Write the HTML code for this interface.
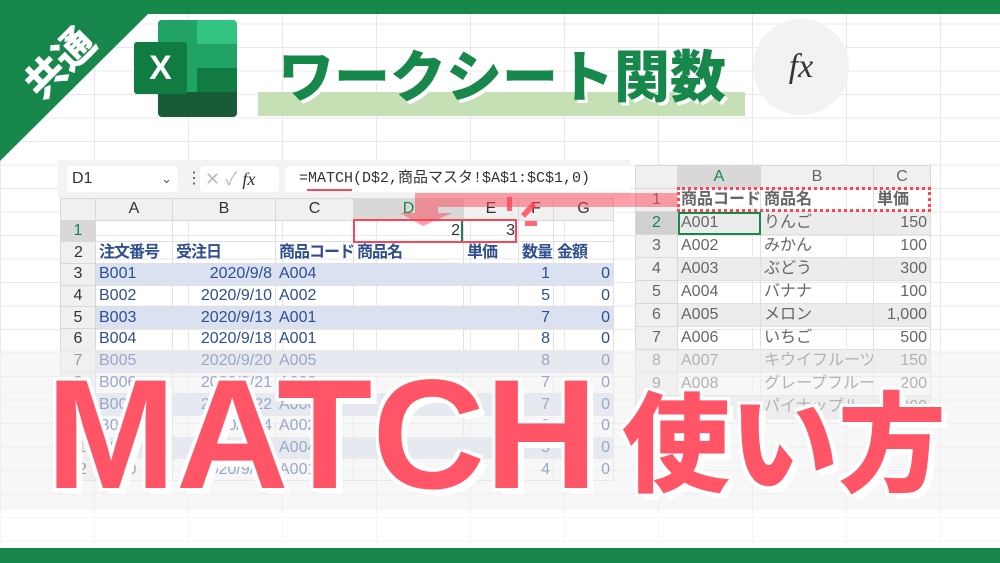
<!DOCTYPE html>
<html><head><meta charset="utf-8"><style>
*{margin:0;padding:0;box-sizing:border-box}
body{width:1000px;height:563px;overflow:hidden;position:relative;background:#fff;font-family:"Liberation Sans","Noto Sans CJK JP",sans-serif}
.grid{position:absolute;left:0;top:0;width:1000px;height:563px;background-image:linear-gradient(#e8e8e8 1px,transparent 1px),linear-gradient(90deg,#e8e8e8 1px,transparent 1px);background-size:94px 23.5px;background-position:0 0,0 0}
.abs{position:absolute}
table{border-collapse:collapse;position:absolute;table-layout:fixed}
td{border:1px solid #e0e0e0;height:21.7px;font-size:16px;padding:0 3px;white-space:nowrap;overflow:hidden;color:#2f4f8f;line-height:20px}
td.h{background:#f0f0f0;color:#333;text-align:center;border-color:#d8d8d8}
td.r{text-align:right}
tr.b td{background:#dae1f0}
tr.b td.h{background:#f0f0f0}
tr.hd td{color:#2f4f8f;font-weight:bold;letter-spacing:-1px}
#t2 td{color:#666;height:23px;font-size:16px}
#t2 tr.g td{background:#ececec}
#t2 tr.g td.h{background:#f0f0f0}
</style></head><body>
<div class="grid"></div>
<div class="abs" style="left:0;top:0;width:1000px;height:14px;background:#18874b"></div>
<div class="abs" style="left:0;top:548px;width:1000px;height:15px;background:#18874b"></div>
<svg class="abs" style="left:0;top:0" width="160" height="170"><polygon points="0,0 148,14 0,161" fill="#18874b"/><polygon points="0,0 160,0 148,14" fill="#18874b"/></svg>
<div class="abs" style="left:18px;top:38px;color:#fff;font-weight:900;font-size:40px;transform:rotate(-45deg);font-family:'Noto Sans CJK JP',sans-serif;line-height:46px">共通</div>
<!-- excel logo -->
<div class="abs" style="left:158px;top:20px;width:79px;height:97px;border-radius:4px;overflow:hidden">
<div style="height:24px;background:#33c481"></div><div style="height:24px;background:#21a366"></div><div style="height:24px;background:#107c41"></div><div style="height:25px;background:#185c37"></div>
<div class="abs" style="left:0;top:0;width:39px;height:72px;background:#21a366"></div></div>
<div class="abs" style="left:134px;top:42px;width:53px;height:52px;background:#107c41;border-radius:3px;color:#fff;font-size:34px;font-weight:bold;text-align:center;line-height:52px">X</div>
<div class="abs" style="left:258px;top:92px;width:487px;height:24px;background:#c5e0b4"></div>
<div class="abs" style="left:278px;top:32px;font-size:56px;font-weight:900;color:#18874b;font-family:'Noto Sans CJK JP',sans-serif;line-height:84px;letter-spacing:0;text-shadow:3px 3px 0 #fff">ワークシート関数</div>
<div class="abs" style="left:753px;top:19px;width:96px;height:96px;border-radius:50%;background:#f2f2f2;text-align:center;line-height:96px;font-family:'Liberation Serif',serif;font-style:italic;font-size:34px;color:#333">fx</div>
<!-- formula bar -->
<div class="abs" style="left:58px;top:160px;width:572px;height:38px;background:#f3f3f3"></div>
<div class="abs" style="left:67px;top:166px;width:111px;height:26px;background:#fff;border-radius:4px;font-size:16px;line-height:26px;padding-left:5px;color:#333">D1<span style="position:absolute;right:6px;color:#555;font-size:13px">&#8964;</span></div>
<div class="abs" style="left:186px;top:166px;color:#555;font-size:16px;line-height:26px">&#8942;</div>
<div class="abs" style="left:200px;top:166px;width:79px;height:26px;background:#fff;border-radius:4px;font-size:18px;line-height:26px;color:#bbb;padding-left:5px">&#10005; &#10003; <i style="font-family:'Liberation Serif',serif;color:#333">fx</i></div>
<div class="abs" style="left:285px;top:166px;width:345px;height:26px;background:#fff;border-radius:4px 0 0 4px;font-family:'Liberation Mono','Noto Sans CJK JP',monospace;font-size:15px;line-height:26px;padding-left:14px;color:#333">=MATCH(D$2,商品マスタ!$A$1:$C$1,0)</div>
<div class="abs" style="left:307px;top:189px;width:45px;height:2px;background:#f45"></div>
<!-- left sheet -->
<table style="left:60px;top:198px;width:553px">
<colgroup><col style="width:35px"><col style="width:77px"><col style="width:103px"><col style="width:78px"><col style="width:110px"><col style="width:55px"><col style="width:35px"><col style="width:60px"></colgroup>
<tr><td class="h"></td><td class="h">A</td><td class="h">B</td><td class="h">C</td><td class="h" style="background:#d8d8d8;color:#18874b">D</td><td class="h">E</td><td class="h">F</td><td class="h">G</td></tr>
<tr><td class="h" style="background:#d8d8d8;color:#18874b">1</td><td></td><td></td><td></td><td class="r" style="color:#333">2</td><td class="r" style="color:#333">3</td><td></td><td></td></tr>
<tr class="hd"><td class="h" style="font-weight:normal;color:#333">2</td><td>注文番号</td><td>受注日</td><td>商品コード</td><td>商品名</td><td>単価</td><td>数量</td><td>金額</td></tr>
<tr class="b"><td class="h">3</td><td>B001</td><td class="r">2020/9/8</td><td>A004</td><td></td><td></td><td class="r">1</td><td class="r">0</td></tr>
<tr><td class="h">4</td><td>B002</td><td class="r">2020/9/10</td><td>A002</td><td></td><td></td><td class="r">5</td><td class="r">0</td></tr>
<tr class="b"><td class="h">5</td><td>B003</td><td class="r">2020/9/13</td><td>A001</td><td></td><td></td><td class="r">7</td><td class="r">0</td></tr>
<tr><td class="h">6</td><td>B004</td><td class="r">2020/9/18</td><td>A001</td><td></td><td></td><td class="r">8</td><td class="r">0</td></tr>
<tr class="b"><td class="h">7</td><td>B005</td><td class="r">2020/9/20</td><td>A005</td><td></td><td></td><td class="r">8</td><td class="r">0</td></tr>
<tr><td class="h">8</td><td>B006</td><td class="r">2020/9/21</td><td>A003</td><td></td><td></td><td class="r">7</td><td class="r">0</td></tr>
<tr class="b"><td class="h">9</td><td>B007</td><td class="r">2020/9/22</td><td>A006</td><td></td><td></td><td class="r">7</td><td class="r">0</td></tr>
<tr><td class="h">10</td><td>B008</td><td class="r">2020/9/24</td><td>A002</td><td></td><td></td><td class="r">9</td><td class="r">0</td></tr>
<tr class="b"><td class="h">11</td><td>B009</td><td class="r">2020/9/27</td><td>A004</td><td></td><td></td><td class="r">5</td><td class="r">0</td></tr>
<tr><td class="h">12</td><td>B010</td><td class="r">2020/9/28</td><td>A001</td><td></td><td></td><td class="r">4</td><td class="r">0</td></tr>
</table>
<div class="abs" style="left:353px;top:219px;width:164px;height:24px;border:2px solid #f45"></div>
<div class="abs" style="left:461px;top:221px;width:2px;height:20px;background:#18874b"></div>
<!-- right sheet -->
<table id="t2" style="left:635px;top:165px;width:295px">
<colgroup><col style="width:42px"><col style="width:83px"><col style="width:113px"><col style="width:57px"></colgroup>
<tr><td class="h"></td><td class="h" style="background:#d8d8d8;color:#18874b">A</td><td class="h">B</td><td class="h">C</td></tr>
<tr><td class="h">1</td><td style="font-weight:bold">商品コード</td><td style="font-weight:bold">商品名</td><td style="font-weight:bold">単価</td></tr>
<tr class="g"><td class="h" style="background:#d0d0d0;color:#18874b">2</td><td style="outline:2px solid #18874b;outline-offset:-2px">A001</td><td>りんご</td><td class="r">150</td></tr>
<tr><td class="h">3</td><td>A002</td><td>みかん</td><td class="r">100</td></tr>
<tr class="g"><td class="h">4</td><td>A003</td><td>ぶどう</td><td class="r">300</td></tr>
<tr><td class="h">5</td><td>A004</td><td>バナナ</td><td class="r">100</td></tr>
<tr class="g"><td class="h">6</td><td>A005</td><td>メロン</td><td class="r">1,000</td></tr>
<tr><td class="h">7</td><td>A006</td><td>いちご</td><td class="r">500</td></tr>
<tr class="g"><td class="h">8</td><td>A007</td><td>キウイフルーツ</td><td class="r">150</td></tr>
<tr><td class="h">9</td><td>A008</td><td>グレープフルーツ</td><td class="r">200</td></tr>
<tr class="g"><td class="h">10</td><td>A009</td><td>パイナップル</td><td class="r">300</td></tr>
</table>
<div class="abs" style="left:677px;top:187px;width:254px;height:25px;border:3px dotted #f45"></div>
<!-- arrow -->
<svg class="abs" style="left:0;top:0" width="1000" height="563">
<g fill="#f45" fill-opacity="0.5"><rect x="415" y="193" width="262" height="14"/><rect x="415" y="207" width="23" height="6"/><polygon points="400,213 452,213 423,226"/></g>
<g fill="#f45" fill-opacity="0.8"><rect x="507" y="197" width="5" height="14"/><polygon points="521,214 532,202 536,206 525,218"/><rect x="525" y="221" width="12" height="5"/></g>
</svg>
<!-- fade overlay -->
<div class="abs" style="left:0;top:350px;width:1000px;height:160px;background:rgba(240,240,240,0.55)"></div>
<div class="abs" style="left:0;top:510px;width:1000px;height:38px;background:rgba(255,255,255,0.6)"></div>
<div class="abs" style="left:46px;top:350px;font-size:156px;font-weight:bold;color:#ff5566;line-height:170px;text-shadow:-3px -3px 0 #fff,3px -3px 0 #fff,-3px 3px 0 #fff,3px 3px 0 #fff,6px 6px 0 #fff">MATCH</div>
<div class="abs" style="left:622px;top:352px;font-size:108px;font-weight:900;color:#ff5566;line-height:170px;font-family:'Noto Sans CJK JP',sans-serif;text-shadow:-3px -3px 0 #fff,3px -3px 0 #fff,-3px 3px 0 #fff,3px 3px 0 #fff,6px 6px 0 #fff">使い方</div>
</body></html>
